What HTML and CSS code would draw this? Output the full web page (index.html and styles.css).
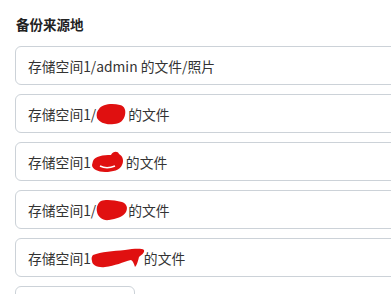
FILE: index.html
```html
<!DOCTYPE html>
<html lang="zh">
<head>
    <meta charset="UTF-8">
    <meta name="viewport" content="width=device-width, initial-scale=1.0">
    <title>备份来源地</title>
    <link rel="stylesheet" href="styles.css">
</head>
<body>
    <div class="main">
        <h3 class="title">备份来源地</h3>
        <div class="list">
            <div class="item">存储空间1/admin 的文件/照片</div>
            <div class="item">存储空间1/<span class="mask w30"><svg width="30" height="22" viewBox="0 0 30 22"><path d="M3 6 C6 1 16 0 24 2 C29 3 30 8 29 12 C28 17 24 21 18 21 C10 22 4 20 1 15 C0 11 1 8 3 6 Z" fill="#e01010"/></svg></span> 的文件</div>
            <div class="item">存储空间1<span class="mask w35"><svg width="33" height="22" viewBox="0 0 33 22"><path d="M2 10 C4 5 12 4 20 4 C22 0 27 0 28 3 C32 5 33 10 31 14 C29 19 22 21 14 21 C7 21 1 18 1 14 Z" fill="#e01010"/><path d="M9 15 C13 17 19 17 24 15" stroke="#fff" stroke-width="1.5" fill="none"/></svg></span>的文件</div>
            <div class="item">存储空间1/<span class="mask w30"><svg width="32" height="22" viewBox="0 0 32 22"><path d="M5 2 C10 0 18 1 26 3 C31 5 32 9 30 13 C27 18 20 20 13 21 C7 22 2 18 1 13 C0 8 2 4 5 2 Z" fill="#e01010"/></svg></span>的文件</div>
            <div class="item">存储空间1<span class="mask w53"><svg width="54" height="22" viewBox="0 0 54 22"><path d="M2 8 C10 5 22 4 34 3 C42 2 50 1 53 3 C54 6 50 8 48 10 C47 14 46 18 44 20 C43 17 42 14 40 13 C32 15 24 19 14 20 C7 21 1 18 1 14 C0 11 1 9 2 8 Z" fill="#e01010"/></svg></span>的文件</div>
        </div>
        <button class="more"></button>
    </div>
</body>
</html>
```

FILE: styles.css
```css
body{
    margin: 0;
    height: 294px;
    font-family: "Noto Sans CJK SC", "Noto Sans", sans-serif;
    color: #333;
    background-color: #fff;
    overflow: hidden;
}
.main{
    height: 294px;
    padding: 16px 0 0 15px;
    box-sizing: border-box;
    overflow: hidden;
}
.title{
    margin: 0 0 14px 1px;
    font-size: 13.5px;
    font-weight: 700;
    line-height: 16px;
    color: #222;
}
.list{
    display: flex;
    flex-direction: column;
    gap: 9px;
}
.item{
    height: 37px;
    width: calc(100% + 10px);
    border: 1px solid #ccd2d8;
    border-radius: 6px;
    padding-left: 12px;
    display: flex;
    align-items: center;
    font-size: 13.8px;
    white-space: nowrap;
}
.mask{
    display: inline-block;
    position: relative;
    height: 16px;
}
.mask svg{
    position: absolute;
    left: 0;
    top: -3px;
}
.w30{
    width: 32px;
}
.w35{
    width: 35px;
}
.w53{
    width: 53px;
}
.more{
    margin-top: 9px;
    width: 120px;
    height: 37px;
    border: 1px solid #ccd2d8;
    border-radius: 6px;
    background-color: #fff;
}
```
